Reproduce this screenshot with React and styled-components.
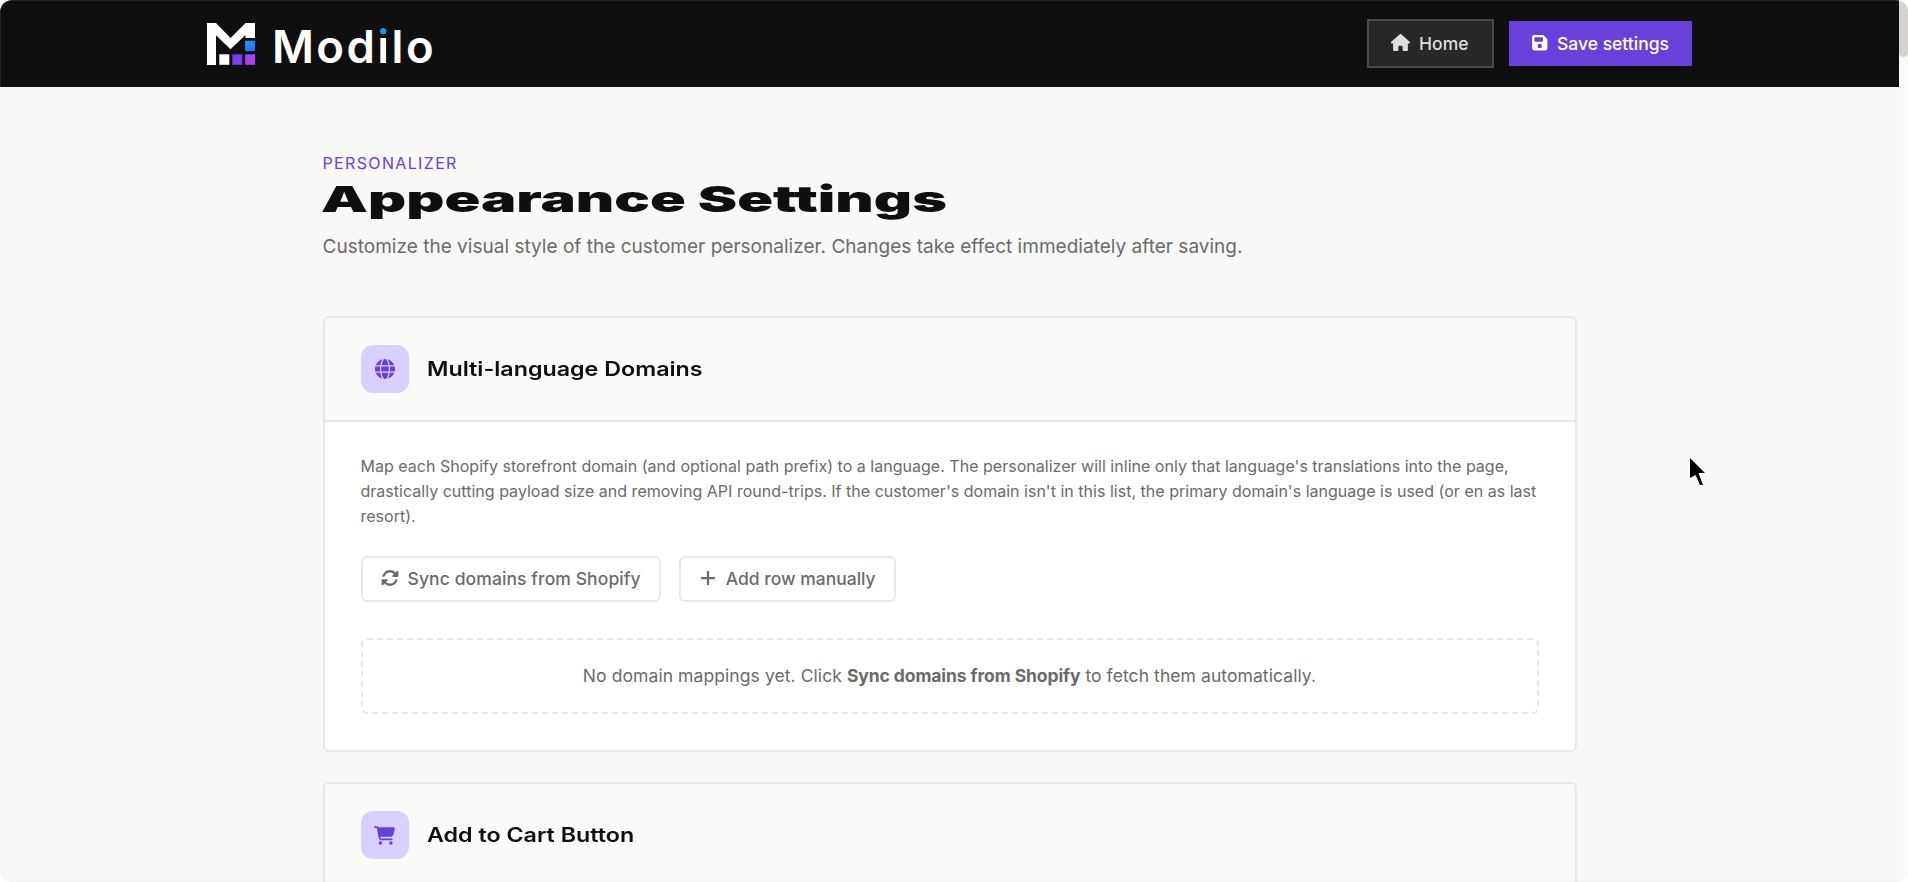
import React from 'react';
import styled, { createGlobalStyle } from 'styled-components';
import { FaHouse, FaFloppyDisk, FaGlobe, FaRotate, FaPlus, FaCartShopping } from 'react-icons/fa6';

const GlobalStyle = createGlobalStyle`
    * { box-sizing: border-box; }
    body {
        margin: 0;
        background: #fff;
        font-family: "Inter", "Liberation Sans", sans-serif;
        color: #0f0f0f;
    }
`;

/* Styled Components */
const Window = styled.div`
    position: relative;
    display: flex;
    height: 882px;
    overflow: hidden;
    border-radius: 12px;
    background: #f8f8f6;

    &::after {
        content: "";
        position: absolute;
        inset: 0;
        border-radius: 12px;
        box-shadow: inset 0 0 0 1px rgba(215, 215, 215, 0.1);
        pointer-events: none;
    }
`;

const Page = styled.div`
    flex: 1;
    min-width: 0;
`;

const ScrollTrack = styled.div`
    width: 9px;
    background: #fafaf9;
`;

const ScrollThumb = styled.div`
    height: 57px;
    border-radius: 5px;
    background: #d6d3cd;
`;

const Header = styled.header`
    display: flex;
    justify-content: space-between;
    align-items: center;
    height: 87px;
    padding: 0 207px;
    background: #0f0f0f;
`;

const Brand = styled.div`
    display: flex;
    align-items: center;
    height: 87px;
    gap: 17px;
`;

const Wordmark = styled.span`
    color: #fff;
    font-size: 45.5px;
    font-weight: 600;
    line-height: 60px;
    letter-spacing: 2.4px;
    margin-top: 7px;
`;

/* the dot of the i carries the brand blue */
const BlueDot = styled.span`
    background: linear-gradient(to bottom, #1e90ff 32%, #fff 32%);
    -webkit-background-clip: text;
    background-clip: text;
    color: transparent;
`;

const Actions = styled.div`
    display: flex;
    align-items: center;
    gap: 15px;
`;

const HeaderButton = styled.button`
    display: flex;
    align-items: center;
    gap: 9px;
    height: ${({ $primary }) => ($primary ? '45px' : '49px')};
    padding: ${({ $primary }) => ($primary ? '0 23px 0 22px' : '0 23px 0 22px')};
    border: ${({ $primary }) => ($primary ? 'none' : '2px solid #4a4a4a')};
    background: ${({ $primary }) => ($primary ? '#6741d9' : '#272727')};
    color: ${({ $primary }) => ($primary ? '#fff' : '#dedede')};
    font-family: inherit;
    font-size: 17.5px;
    font-weight: 500;
    white-space: nowrap;

    svg {
        width: auto;
        height: ${({ $primary }) => ($primary ? '17.5px' : '19px')};
        margin-top: -2px;
    }
`;

const Main = styled.main`
    width: 1254px;
    margin: 0 auto;
    padding-top: 64px;
`;

const Eyebrow = styled.div`
    color: #6741d9;
    font-size: 16px;
    line-height: 24px;
    letter-spacing: 1.35px;
`;

const Title = styled.h1`
    width: max-content;
    margin: 0 0 0 -2px;
    font-size: 36px;
    font-weight: 900;
    line-height: 48px;
    transform: scaleX(1.645);
    transform-origin: left;
`;

const Subtitle = styled.p`
    margin: 9px 0 54px;
    color: #6b6b6b;
    font-size: 19px;
    line-height: 30px;
    letter-spacing: 0.02px;
`;

const Card = styled.section`
    margin-bottom: 30px;
    overflow: hidden;
    border: 2px solid #e8e8e5;
    border-radius: 6px;
    background: #fff;
`;

const CardHeader = styled.div`
    display: flex;
    align-items: center;
    gap: 18px;
    height: 104px;
    padding: 0 36px;
    border-bottom: 2px solid #e8e8e5;
    background: #fafaf8;
`;

const IconTile = styled.div`
    display: flex;
    align-items: center;
    justify-content: center;
    width: 48px;
    height: 48px;
    border-radius: 12px;
    background: #d9d0ff;
    color: #6741d9;

    svg {
        width: auto;
        height: ${({ $iconSize }) => $iconSize}px;
    }
`;

const CardTitle = styled.h2`
    margin: 0;
    font-size: 20px;
    font-weight: 600;
    line-height: 30px;
    transform: scaleX(1.163);
    transform-origin: left;
`;

const CardBody = styled.div`
    padding: 32px 36px 36px;
`;

const Description = styled.p`
    margin: 0 0 27px;
    color: #6b6b6b;
    font-size: 16px;
    line-height: 25px;
    letter-spacing: 0.018px;
`;

const ButtonRow = styled.div`
    display: flex;
    gap: 18px;
    margin-bottom: 36px;
`;

const OutlineButton = styled.button`
    display: flex;
    align-items: center;
    gap: 9px;
    height: 46px;
    padding: 0 18px 2px;
    border: 2px solid #e8e8e5;
    border-radius: 6px;
    background: #fff;
    color: #6b6b6b;
    font-family: inherit;
    font-size: 17.5px;
    font-weight: 500;
    letter-spacing: ${({ $spacing }) => $spacing || '0'};
    white-space: nowrap;

    svg {
        width: auto;
        height: 18px;
    }
`;

const EmptyState = styled.div`
    height: 76px;
    border: 2px dashed #e8e8e5;
    border-radius: 6px;
    color: #6b6b6b;
    font-size: 17.5px;
    line-height: 71px;
    letter-spacing: 0.08px;
    text-align: center;

    strong {
        letter-spacing: -0.09px;
    }
`;

const Pointer = styled.svg`
    position: absolute;
    left: 1688px;
    top: 456px;
`;

function LogoMark() {
    return (
        <svg width="48" height="42" viewBox="0 0 48 42">
            <defs>
                <linearGradient id="blue" x1="0" y1="0" x2="1" y2="1">
                    <stop offset="0" stopColor="#1ea0ff" />
                    <stop offset="1" stopColor="#2463f5" />
                </linearGradient>
                <linearGradient id="violet" x1="0" y1="0" x2="1" y2="1">
                    <stop offset="0" stopColor="#6240ee" />
                    <stop offset="1" stopColor="#8a3cf5" />
                </linearGradient>
                <linearGradient id="magenta" x1="0" y1="0" x2="1" y2="1">
                    <stop offset="0" stopColor="#9545f7" />
                    <stop offset="1" stopColor="#b93cf0" />
                </linearGradient>
            </defs>
            <path fill="#fff" d="M0 0H9L23.5 15L38.5 0H48V15H38.5V12L23.5 26.3L9 12.3V42H0Z" />
            <rect x="12.3" y="31.3" width="10" height="10.5" fill="#fff" />
            <rect x="25.3" y="31.3" width="10" height="10.5" fill="url(#violet)" />
            <rect x="38.2" y="31.3" width="9.8" height="10.5" fill="url(#magenta)" />
            <rect x="38.2" y="17.7" width="9.8" height="10.5" fill="url(#blue)" />
        </svg>
    );
}

function SettingsCard({ icon, iconSize, title, children }) {
    return (
        <Card>
            <CardHeader>
                <IconTile $iconSize={iconSize}>{icon}</IconTile>
                <CardTitle>{title}</CardTitle>
            </CardHeader>
            {children && <CardBody>{children}</CardBody>}
        </Card>
    );
}

export default function App() {
    return (
        <>
            <GlobalStyle />
            <Window>
                <Page>
                    <Header>
                        <Brand>
                            <LogoMark />
                            <Wordmark>Mod<BlueDot>i</BlueDot>lo</Wordmark>
                        </Brand>
                        <Actions>
                            <HeaderButton><FaHouse />Home</HeaderButton>
                            <HeaderButton $primary><FaFloppyDisk />Save settings</HeaderButton>
                        </Actions>
                    </Header>
                    <Main>
                        <Eyebrow>PERSONALIZER</Eyebrow>
                        <Title>Appearance Settings</Title>
                        <Subtitle>
                            Customize the visual style of the customer personalizer. Changes take effect immediately after saving.
                        </Subtitle>
                        <SettingsCard icon={<FaGlobe />} iconSize={20} title="Multi-language Domains">
                            <Description>
                                Map each Shopify storefront domain (and optional path prefix) to a language. The
                                personalizer will inline only that language's translations into the page, drastically
                                cutting payload size and removing API round-trips. If the customer's domain isn't in
                                this list, the primary domain's language is used (or en as last resort).
                            </Description>
                            <ButtonRow>
                                <OutlineButton $spacing="0.1px"><FaRotate />Sync domains from Shopify</OutlineButton>
                                <OutlineButton><FaPlus />Add row manually</OutlineButton>
                            </ButtonRow>
                            <EmptyState>
                                No domain mappings yet. Click <strong>Sync domains from Shopify</strong> to fetch them automatically.
                            </EmptyState>
                        </SettingsCard>
                        <SettingsCard icon={<FaCartShopping />} iconSize={21} title="Add to Cart Button" />
                    </Main>
                </Page>
                <ScrollTrack>
                    <ScrollThumb />
                </ScrollTrack>
                <Pointer width="20" height="32" viewBox="-2 -2 20 32">
                    <path d="M0 0L15 15H8.5L13 27H10L5.5 17L0 20Z" fill="#000" stroke="#fff" strokeWidth="2" paintOrder="stroke" />
                </Pointer>
            </Window>
        </>
    );
}
